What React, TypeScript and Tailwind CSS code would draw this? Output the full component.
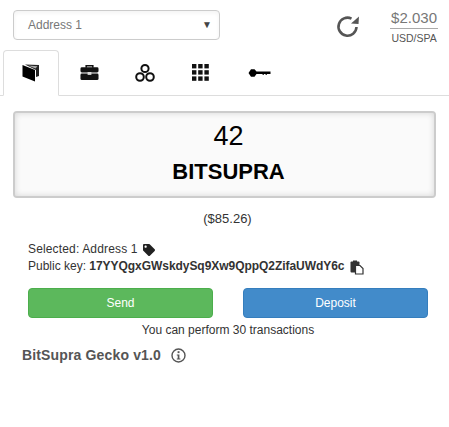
import { FaTag } from 'react-icons/fa';

function RefreshIcon() {
  return (
    <svg width="24" height="24" viewBox="0 0 24 24" fill="none">
      <path d="M20.5 13 A9 9 0 1 1 15.5 4.6" stroke="#555" strokeWidth="2.6" />
      <path d="M15 9.5 L22.5 10 L23 2.5 Z" fill="#555" />
    </svg>
  );
}

function WalletIcon() {
  return (
    <svg width="18" height="18" viewBox="0 0 18 18">
      <path d="M3 0.5 L17 1 L17 12 L14 13 L14 6 Z" fill="#222" />
      <path d="M6 1.5 L15.5 2.2 L13.5 4.5 Z" fill="#aaa" />
      <path d="M0.5 1 L13 6 L13 17.5 L0.5 12.5 Z" fill="#000" />
    </svg>
  );
}

function BriefcaseIcon() {
  return (
    <svg width="19" height="17" viewBox="0 0 20 17">
      <path d="M6.5 3.5 V1.5 H13.5 V3.5" fill="none" stroke="#111" strokeWidth="1.6" />
      <rect x="0.5" y="3" width="19" height="5.5" rx="1.5" fill="#111" />
      <rect x="0.5" y="9.5" width="19" height="7" rx="1.5" fill="#111" />
      <rect x="8" y="8" width="4" height="3" fill="#ddd" />
    </svg>
  );
}

function CirclesIcon() {
  return (
    <svg width="20" height="20" viewBox="0 0 20 20" fill="none" stroke="#111" strokeWidth="2">
      <circle cx="10" cy="5.5" r="3.6" />
      <circle cx="5" cy="14" r="3.8" />
      <circle cx="15" cy="14" r="3.8" />
    </svg>
  );
}

function GridIcon() {
  const cells = [0, 6.2, 12.4];
  return (
    <svg width="17" height="17" viewBox="0 0 17 17" fill="#111">
      {cells.map((y) =>
        cells.map((x) => <rect key={`${x}-${y}`} x={x} y={y} width="4.4" height="4.4" />),
      )}
    </svg>
  );
}

function KeyIcon() {
  return (
    <svg width="23" height="10" viewBox="0 0 23 10" fill="#000">
      <path d="M0.5 5 L3 1.2 H6.5 L8.5 3.6 H22.5 V6 H19 V6.8 H17.5 V6 H16 V6.8 H14.5 V6 H8.5 L6.5 8.8 H3 Z" />
    </svg>
  );
}

function CopyIcon() {
  return (
    <svg width="14" height="15" viewBox="0 0 14 15">
      <rect x="0.5" y="1.5" width="9" height="11" rx="1" fill="#333" />
      <rect x="3" y="0.5" width="4" height="2.5" fill="#333" />
      <path d="M5.5 5.5 H10 L13 8.5 V14 H5.5 Z" fill="#fff" stroke="#333" strokeWidth="1.2" />
    </svg>
  );
}

function InfoIcon() {
  return (
    <svg width="15" height="15" viewBox="0 0 15 15" fill="none">
      <circle cx="7.5" cy="7.5" r="6.5" stroke="#555" strokeWidth="1.4" />
      <rect x="6.6" y="3.2" width="1.9" height="1.9" fill="#555" />
      <path d="M5.8 6.5 H8.4 V10.5 H9.4 V11.6 H5.8 V10.5 H6.7 V7.6 H5.8 Z" fill="#555" />
    </svg>
  );
}

export default function App() {
  return (
    <div className="w-[449px] h-[427px] bg-white font-['Liberation_Sans',Arial,sans-serif] text-[#333] overflow-hidden">
      <div className="flex h-[50px]">
        <div className="pl-[13px] pt-[10px]">
          <div className="w-[207px] h-[30px] border border-[#ccc] rounded flex items-center justify-between pl-[14px] pr-[7px] text-xs text-[#777] shadow-inner">
            <span>Address 1</span>
            <span className="text-[10px] text-[#444]">▼</span>
          </div>
        </div>
        <div className="ml-auto flex">
          <div className="mt-[14px] mr-[30px]"><RefreshIcon /></div>
          <div className="pr-[11px] pt-[8px] flex flex-col items-center">
            <span className="text-[15px] leading-[20px] text-[#777] border-b border-[#aaa] px-[1px]">$2.030</span>
            <span className="text-[10.5px] leading-[15px] mt-[2px] text-[#555]">USD/SPA</span>
          </div>
        </div>
      </div>

      <div className="flex h-[46px] pl-[3px] border-b border-[#ddd]">
        <div className="w-[56px] h-[46px] border border-[#ddd] border-b-white rounded-t bg-white flex items-center justify-center">
          <WalletIcon />
        </div>
        <div className="w-[60px] flex items-center justify-center"><BriefcaseIcon /></div>
        <div className="w-[52px] flex items-center justify-center"><CirclesIcon /></div>
        <div className="w-[58px] flex items-center justify-center"><GridIcon /></div>
        <div className="w-[60px] flex items-center justify-center"><KeyIcon /></div>
      </div>

      <div className="mx-[13px] mt-[15px] h-[87px] border-2 border-[#ccc] rounded bg-[#fafafa] shadow-[inset_0_0_6px_rgba(0,0,0,0.15)] flex flex-col items-center text-black pl-[8px]">
        <span className="text-[27px] leading-[30px] mt-[8px]">42</span>
        <span className="text-[22px] leading-[26px] font-bold mt-[8px]">BITSUPRA</span>
      </div>

      <div className="text-center text-[13px] mt-[12px] leading-[17px] pl-[6px]">($85.26)</div>

      <div className="pl-[28px] mt-[14px] text-xs leading-[17px]">
        <div className="flex items-center gap-[5px] tracking-[0.15px]">Selected: Address 1 <FaTag size={12} color="#222" /></div>
        <div className="flex items-center">
          Public key:&nbsp;<b className="tracking-[-0.05px]">17YYQgxGWskdySq9Xw9QppQ2ZifaUWdY6c</b>
          <span className="ml-[6px] mt-[2px]"><CopyIcon /></span>
        </div>
      </div>

      <div className="flex justify-between pl-[28px] pr-[21px] mt-[13px]">
        <div className="w-[185px] h-[30px] rounded bg-[#5cb85c] border border-[#4cae4c] text-white text-xs flex items-center justify-center">Send</div>
        <div className="w-[185px] h-[30px] rounded bg-[#428bca] border border-[#357ebd] text-white text-xs flex items-center justify-center">Deposit</div>
      </div>

      <div className="text-center text-xs leading-[17px] mt-[4px] pl-[7px]">You can perform 30 transactions</div>

      <div className="pl-[22px] mt-[6px] flex items-center gap-[10px] text-[#555] font-bold text-sm tracking-[0.15px]">
        BitSupra Gecko v1.0
        <InfoIcon />
      </div>
    </div>
  );
}
